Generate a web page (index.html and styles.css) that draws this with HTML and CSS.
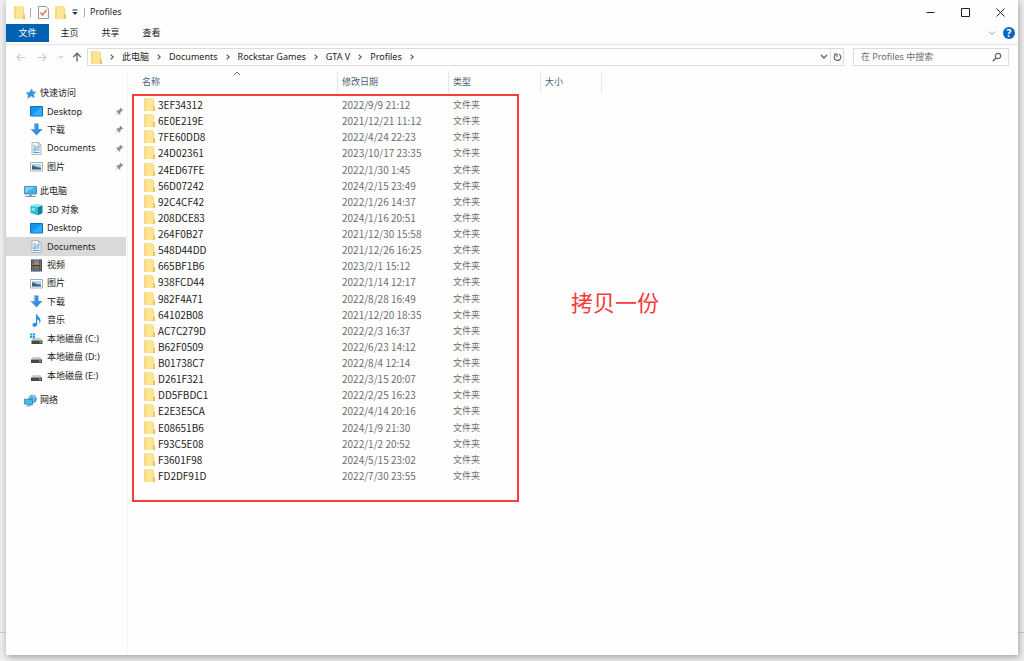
FILE: index.html
```html
<!DOCTYPE html>
<html lang="zh-CN">
<head>
<meta charset="utf-8">
<title>Profiles</title>
<link rel="stylesheet" href="styles.css">
</head>
<body>
<svg class="sprite" aria-hidden="true">
  <symbol id="folder" viewBox="0 0 11 13"><path d="M1 0h8v1h1v12H0V1z" fill="#fde596"/><path d="M0 1l1-1h1v13H0z" fill="#f8d980"/><path d="M9 8h1.500l.5 1v4H8.500l.5-1z" fill="#ecc65c"/><path d="M9 2h1v6H9z" fill="#f6d884"/></symbol>
  <symbol id="chev" viewBox="0 0 6 6"><path d="M1.700.6L4.200 3 1.700 5.400" fill="none" stroke="#555" stroke-width="1.100"/></symbol>
  <symbol id="pin" viewBox="0 0 10 10"><path d="M6 .8L9.200 4l-1 .5-.6-.1L6 6l-.1 1.900-.9.7-1.700-1.800L1 9.300l-.4-.3 2.500-2.600L1.300 4.600l.8-.8L4 3.700l1.500-1.500-.1-.8z" fill="#8b9197"/></symbol>
  <symbol id="desktop" viewBox="0 0 13 13"><path d="M.5 1.500h12v9.500H.5z" fill="#1595ee" stroke="#0b6fc0"/><path d="M1 10.500L12 2v8.500z" fill="#31aefb"/></symbol>
  <symbol id="down" viewBox="0 0 13 13"><path d="M4.500.5h4V6h4L6.500 12.500.5 6h4z" fill="#3b8ede"/><path d="M4.500.5h1V7h-3l-2-1h4z" fill="#63aaed"/></symbol>
  <symbol id="doc" viewBox="0 0 13 13"><path d="M2 .5h6.500l2.500 2.500v9.500H2z" fill="#f7fafc" stroke="#9aa6ae" stroke-width=".8"/><path d="M8.500.5V3H11" fill="none" stroke="#9aa6ae" stroke-width=".8"/><path d="M3.500 4H6M3.500 6h6M6 8h3.500M3.500 10.500h6M7.500 4.500h2" stroke="#4a9ccc"/><path d="M3.500 7h2v2.500h-2z" fill="#62b0d8"/></symbol>
  <symbol id="pic" viewBox="0 0 13 13"><path d="M.5 2.500h12v8.500H.5z" fill="#fff" stroke="#a6adb3"/><path d="M2 4h9v5.500H2z" fill="#a9d3ee"/><path d="M2 5.500l2 .2L6.500 7l4.500.7v1.800H2z" fill="#37617c"/></symbol>
  <symbol id="pc" viewBox="0 0 13 13"><path d="M.5 1.500h12v7.500H.5z" fill="#3db2ed" stroke="#5b8cab"/><path d="M1 2h10L1 8z" fill="#78d2f8"/><path d="M1 11h11v1H1zM5 9.500h3V11H5z" fill="#8599a5"/></symbol>
  <symbol id="cube" viewBox="0 0 13 13"><path d="M.5 2.500L5.500.8l7 1.500-5 2z" fill="#94e4ee"/><path d="M.5 2.500l7 1.800v8L.5 10z" fill="#29c0d4"/><path d="M7.500 4.300l5-2v7.900l-5 2.100z" fill="#0d83a2"/><path d="M2 4.500l3 .8v3L2 7.500z" fill="#8de4ee"/></symbol>
  <symbol id="film" viewBox="0 0 13 13"><path d="M1 .5h11v12H1z" fill="#353535"/><path d="M3.500 1h6v5h-6z" fill="#6484b8"/><path d="M3.500 7h6v5h-6z" fill="#997a45"/><path d="M3.500 4.500L6 3l3.500 2V6h-6z" fill="#b68a3a"/><path d="M3.500 9.500L7 8l2.500 3V12h-6z" fill="#4e6fa8"/><path d="M2.200 1.500v11M10.800 1.500v11" stroke="#ddd" stroke-dasharray="1 1"/></symbol>
  <symbol id="music" viewBox="0 0 13 13"><path d="M6 .5h1.200c.2 2.200 3.800 3 3.300 7-.3 1-.8 1.700-1.300 2 .7-2.300-.3-3.800-2-4.300v4.900c0 3-4.700 3.400-4.700.9 0-1.700 1.900-2.500 3.500-2z" fill="#1b91e8"/></symbol>
  <symbol id="drive" viewBox="0 0 13 13"><path d="M3 6h7l2 2.500H1z" fill="#c9cccd"/><path d="M1 8.500h11V12H1z" fill="#444849"/><path d="M9 9.500h2v1.500H9z" fill="#59cb5a"/></symbol>
  <symbol id="drivec" viewBox="0 0 13 13"><path d="M3 6h7l2.500 2.500h-11z" fill="#c9cccd"/><path d="M1.500 8.500h11V12h-11z" fill="#444849"/><path d="M9.500 9.500h2v1.500h-2z" fill="#59cb5a"/><path d="M0 1.500h2v2H0zM2.600 1.200H5v2.300H2.600zM0 4h2v2H0zM2.600 4H5v2.200H2.600z" fill="#18a5ea"/></symbol>
  <symbol id="net" viewBox="0 0 13 13"><circle cx="8.500" cy="5" r="4.300" fill="#4a9fcf"/><path d="M5 3.500q3.500-3 7 0M8.500.8q3 3.700 0 8" fill="none" stroke="#b2dcf1" stroke-width=".8"/><path d="M.5 5l8 .8v5.100l-8-.8z" fill="#45b8ee" stroke="#3f82a8" stroke-width=".8"/><path d="M2.500 12.400L7 11.300" stroke="#7d919d"/></symbol>
  <symbol id="star" viewBox="0 0 13 13"><path d="M8 1.500l.8 3 3.700.3-2.800 2.400.8 4-3.300-1.900-4 2.400 1-3.600-2.400-2.400 3.700-.6z" fill="#2d97e0"/></symbol>
</svg>
<div class="window">
  <header class="titlebar">
    <svg class="folder"><use href="#folder"/></svg>
    <span class="rule"></span>
    <button class="tool" aria-label="属性"><svg width="11" height="13" viewBox="0 0 11 13"><path d="M.5.500H8L10.500 3v9.500H.5z" fill="#fafafa" stroke="#9a9a9a"/><path d="M2.500 6.500L4.500 9l4-5" fill="none" stroke="#e5794e" stroke-width="1.500"/></svg></button>
    <button class="tool" aria-label="新建文件夹"><svg class="folder"><use href="#folder"/></svg></button>
    <button class="tool small" aria-label="自定义快速访问工具栏"><svg width="6" height="7" viewBox="0 0 6 7"><path d="M.5 1h5" stroke="#333"/><path d="M.3 3h5.400L3 6z" fill="#333"/></svg></button>
    <span class="rule near"></span>
    <h1 class="title">Profiles</h1>
    <div class="controls">
      <button aria-label="最小化"><svg width="9" height="9" viewBox="0 0 9 9"><path d="M.5 4.500h8" stroke="#222"/></svg></button>
      <button aria-label="最大化"><svg width="9" height="9" viewBox="0 0 9 9"><path d="M.5.500h8v8h-8z" fill="none" stroke="#222"/></svg></button>
      <button aria-label="关闭"><svg width="9" height="9" viewBox="0 0 9 9"><path d="M.5.500l8 8M8.500.5l-8 8" stroke="#222"/></svg></button>
    </div>
  </header>
  <div class="tabs">
    <button class="tab file">文件</button>
    <button class="tab">主页</button>
    <button class="tab">共享</button>
    <button class="tab">查看</button>
    <button class="tool expand" aria-label="展开功能区"><svg width="8" height="6" viewBox="0 0 8 6"><path d="M1 1.500l3 3 3-3" fill="none" stroke="#999"/></svg></button>
    <button class="help" aria-label="帮助">?</button>
  </div>
  <div class="address">
    <div class="history">
      <button class="tool" aria-label="后退"><svg width="10" height="9" viewBox="0 0 10 9"><path d="M9.500 4.500H1M4.500 1L1 4.500 4.500 8" fill="none" stroke="#ccc" stroke-width="1.200"/></svg></button>
      <button class="tool" aria-label="前进"><svg width="10" height="9" viewBox="0 0 10 9"><path d="M.5 4.500H9M5.500 1L9 4.500 5.500 8" fill="none" stroke="#ccc" stroke-width="1.200"/></svg></button>
      <button class="tool" aria-label="最近浏览的位置"><svg width="6" height="5" viewBox="0 0 6 5"><path d="M1 1l2 2 2-2" fill="none" stroke="#bbb"/></svg></button>
      <button class="tool" aria-label="上移"><svg width="10" height="10" viewBox="0 0 10 10"><path d="M5 9.500V1.500M1.200 5L5 1.200 8.800 5" fill="none" stroke="#666" stroke-width="1.400"/></svg></button>
    </div>
    <nav class="crumbs" aria-label="路径">
      <svg class="folder"><use href="#folder"/></svg>
      <svg class="chev"><use href="#chev"/></svg><a href="#">此电脑</a>
      <svg class="chev"><use href="#chev"/></svg><a href="#">Documents</a>
      <svg class="chev"><use href="#chev"/></svg><a href="#">Rockstar Games</a>
      <svg class="chev"><use href="#chev"/></svg><a href="#">GTA V</a>
      <svg class="chev"><use href="#chev"/></svg><a href="#">Profiles</a>
      <svg class="chev"><use href="#chev"/></svg>
      <button class="tool drop" aria-label="以前的位置"><svg width="8" height="6" viewBox="0 0 8 6"><path d="M1 1l3 3 3-3" fill="none" stroke="#666" stroke-width="1.400"/></svg></button>
      <button class="tool refresh" aria-label="刷新"><svg width="9" height="10" viewBox="0 0 9 10"><path d="M6 2.200A3.300 3.300 0 1 1 2.500 2.500M1 2h3v3" fill="none" stroke="#666" stroke-width="1.200"/></svg></button>
    </nav>
    <label class="search">
      <input type="text" aria-label="搜索" placeholder="在 Profiles 中搜索">
      <svg width="10" height="10" viewBox="0 0 10 10"><circle cx="6" cy="4" r="2.700" fill="none" stroke="#666" stroke-width="1.200"/><path d="M4 6L.8 9.200" stroke="#666" stroke-width="1.500"/></svg>
    </label>
  </div>
  <div class="body">
    <nav class="sidebar" aria-label="导航窗格">
      <ul class="quick">
        <li><a class="root" href="#"><svg><use href="#star"/></svg>快速访问</a></li>
        <li><a href="#"><svg><use href="#desktop"/></svg>Desktop<svg class="pin"><use href="#pin"/></svg></a></li>
        <li><a href="#"><svg><use href="#down"/></svg>下载<svg class="pin"><use href="#pin"/></svg></a></li>
        <li><a href="#"><svg><use href="#doc"/></svg>Documents<svg class="pin"><use href="#pin"/></svg></a></li>
        <li><a href="#"><svg><use href="#pic"/></svg>图片<svg class="pin"><use href="#pin"/></svg></a></li>
      </ul>
      <ul class="computer">
        <li><a class="root" href="#"><svg><use href="#pc"/></svg>此电脑</a></li>
        <li><a href="#"><svg><use href="#cube"/></svg>3D 对象</a></li>
        <li><a href="#"><svg><use href="#desktop"/></svg>Desktop</a></li>
        <li><a class="current" aria-current="true" href="#"><svg><use href="#doc"/></svg>Documents</a></li>
        <li><a href="#"><svg><use href="#film"/></svg>视频</a></li>
        <li><a href="#"><svg><use href="#pic"/></svg>图片</a></li>
        <li><a href="#"><svg><use href="#down"/></svg>下载</a></li>
        <li><a href="#"><svg><use href="#music"/></svg>音乐</a></li>
        <li><a href="#"><svg><use href="#drivec"/></svg>本地磁盘 (C:)</a></li>
        <li><a href="#"><svg><use href="#drive"/></svg>本地磁盘 (D:)</a></li>
        <li><a href="#"><svg><use href="#drive"/></svg>本地磁盘 (E:)</a></li>
      </ul>
      <ul>
        <li><a class="root" href="#"><svg><use href="#net"/></svg>网络</a></li>
      </ul>
    </nav>
    <main class="content">
      <table class="files">
        <colgroup><col class="c-name"><col class="c-date"><col class="c-type"><col class="c-size"></colgroup>
        <thead><tr>
          <th><div>名称<svg class="sort" width="8" height="5" viewBox="0 0 8 5"><path d="M1 4l3-3 3 3" fill="none" stroke="#777"/></svg></div></th>
          <th><div>修改日期</div></th><th><div>类型</div></th><th><div>大小</div></th>
        </tr></thead>
        <tbody>
          <tr><td><svg class="folder"><use href="#folder"/></svg>3EF34312</td><td>2022/9/9 21:12</td><td>文件夹</td><td></td></tr>
          <tr><td><svg class="folder"><use href="#folder"/></svg>6E0E219E</td><td>2021/12/21 11:12</td><td>文件夹</td><td></td></tr>
          <tr><td><svg class="folder"><use href="#folder"/></svg>7FE60DD8</td><td>2022/4/24 22:23</td><td>文件夹</td><td></td></tr>
          <tr><td><svg class="folder"><use href="#folder"/></svg>24D02361</td><td>2023/10/17 23:35</td><td>文件夹</td><td></td></tr>
          <tr><td><svg class="folder"><use href="#folder"/></svg>24ED67FE</td><td>2022/1/30 1:45</td><td>文件夹</td><td></td></tr>
          <tr><td><svg class="folder"><use href="#folder"/></svg>56D07242</td><td>2024/2/15 23:49</td><td>文件夹</td><td></td></tr>
          <tr><td><svg class="folder"><use href="#folder"/></svg>92C4CF42</td><td>2022/1/26 14:37</td><td>文件夹</td><td></td></tr>
          <tr><td><svg class="folder"><use href="#folder"/></svg>208DCE83</td><td>2024/1/16 20:51</td><td>文件夹</td><td></td></tr>
          <tr><td><svg class="folder"><use href="#folder"/></svg>264F0B27</td><td>2021/12/30 15:58</td><td>文件夹</td><td></td></tr>
          <tr><td><svg class="folder"><use href="#folder"/></svg>548D44DD</td><td>2021/12/26 16:25</td><td>文件夹</td><td></td></tr>
          <tr><td><svg class="folder"><use href="#folder"/></svg>665BF1B6</td><td>2023/2/1 15:12</td><td>文件夹</td><td></td></tr>
          <tr><td><svg class="folder"><use href="#folder"/></svg>938FCD44</td><td>2022/1/14 12:17</td><td>文件夹</td><td></td></tr>
          <tr><td><svg class="folder"><use href="#folder"/></svg>982F4A71</td><td>2022/8/28 16:49</td><td>文件夹</td><td></td></tr>
          <tr><td><svg class="folder"><use href="#folder"/></svg>64102B08</td><td>2021/12/20 18:35</td><td>文件夹</td><td></td></tr>
          <tr><td><svg class="folder"><use href="#folder"/></svg>AC7C279D</td><td>2022/2/3 16:37</td><td>文件夹</td><td></td></tr>
          <tr><td><svg class="folder"><use href="#folder"/></svg>B62F0509</td><td>2022/6/23 14:12</td><td>文件夹</td><td></td></tr>
          <tr><td><svg class="folder"><use href="#folder"/></svg>B01738C7</td><td>2022/8/4 12:14</td><td>文件夹</td><td></td></tr>
          <tr><td><svg class="folder"><use href="#folder"/></svg>D261F321</td><td>2022/3/15 20:07</td><td>文件夹</td><td></td></tr>
          <tr><td><svg class="folder"><use href="#folder"/></svg>DD5FBDC1</td><td>2022/2/25 16:23</td><td>文件夹</td><td></td></tr>
          <tr><td><svg class="folder"><use href="#folder"/></svg>E2E3E5CA</td><td>2022/4/14 20:16</td><td>文件夹</td><td></td></tr>
          <tr><td><svg class="folder"><use href="#folder"/></svg>E08651B6</td><td>2024/1/9 21:30</td><td>文件夹</td><td></td></tr>
          <tr><td><svg class="folder"><use href="#folder"/></svg>F93C5E08</td><td>2022/1/2 20:52</td><td>文件夹</td><td></td></tr>
          <tr><td><svg class="folder"><use href="#folder"/></svg>F3601F98</td><td>2024/5/15 23:02</td><td>文件夹</td><td></td></tr>
          <tr><td><svg class="folder"><use href="#folder"/></svg>FD2DF91D</td><td>2022/7/30 23:55</td><td>文件夹</td><td></td></tr>
        </tbody>
      </table>
      <div class="mark"></div>
      <p class="note">拷贝一份</p>
    </main>
  </div>
</div>
</body>
</html>
```
FILE: styles.css
```css
* { box-sizing: border-box; }

body {
  margin: 0;
  min-height: 100vh;
  display: flex;
  padding: 0 6px 6px;
  background: linear-gradient(to top, #efefef 28px, #cfcfcf 28px, #cfcfcf 29px, #efefef 29px);
  font: 9px/16px "Noto Sans", "Noto Sans CJK SC", sans-serif;
  color: #222;
}

button, input {
  font: inherit;
  color: inherit;
  border: 0;
  padding: 0;
  margin: 0;
  background: none;
}

a { color: inherit; text-decoration: none; }
svg { display: block; flex: none; }
ul { list-style: none; margin: 0; padding: 0; }

.sprite { position: absolute; width: 0; height: 0; }
.folder { width: 11px; height: 13px; }
.tool { display: flex; align-items: center; justify-content: center; }

.window {
  flex: 1;
  display: flex;
  flex-direction: column;
  background: #fefefe;
  box-shadow: 1px 2px 7px rgba(0, 0, 0, 0.35);
}

.titlebar {
  display: flex;
  align-items: center;
  height: 24px;
  padding-left: 8px;
}
.rule { width: 1px; height: 9px; margin: 0 7px 0 5px; background: #aaa; }
.rule.near { margin: 0 5px 0 6px; }
.titlebar .tool { margin-right: 6px; }
.titlebar .tool.small { margin-right: 0; }
.title { margin: 0; font-size: 9px; font-weight: 400; }
.controls { display: flex; margin-left: auto; }
.controls button {
  width: 35px;
  height: 24px;
  display: flex;
  align-items: center;
  justify-content: center;
}

.tabs {
  display: flex;
  align-items: center;
  height: 21px;
  padding-bottom: 2px;
  border-bottom: 1px solid #e4e4e4;
}
.tab { width: 41px; height: 18px; }
.tab.file { width: 43px; background: #0063b1; color: #fff; }
.expand { margin-left: auto; }
.help {
  width: 12px;
  height: 12px;
  margin: 0 3px 0 7px;
  border-radius: 50%;
  background: #0b66c3;
  color: #fff;
  font-size: 10px;
  font-weight: 700;
  line-height: 12px;
}

.address {
  display: flex;
  align-items: center;
  padding: 3px 9px 5px 10px;
}
.history { display: flex; align-items: center; gap: 11px; padding-right: 5px; }
.history .tool:nth-child(3) { margin-right: -3px; }
.crumbs {
  flex: 1;
  display: flex;
  align-items: center;
  height: 18px;
  padding-left: 3px;
  border: 1px solid #dcdcdc;
}
.chev { width: 6px; height: 6px; margin: 0 7px; }
.drop { margin-left: auto; width: 12px; }
.refresh { width: 13px; height: 16px; border-left: 1px solid #dcdcdc; }
.search {
  display: flex;
  align-items: center;
  width: 156px;
  height: 18px;
  margin-left: 9px;
  padding: 0 6px 0 7px;
  border: 1px solid #dcdcdc;
}
.search input { flex: 1; min-width: 0; outline: 0; }
.search input::placeholder { color: #6d6d6d; opacity: 1; }

.body { flex: 1; display: flex; }

.sidebar {
  flex: none;
  width: 122px;
  padding: 13px 1px 0 0;
  border-right: 1px solid #f5f5f5;
  display: flex;
  flex-direction: column;
  gap: 6px;
}
.sidebar ul { display: grid; }
.quick { min-height: 92px; }
.computer { min-height: 203px; }
.sidebar a {
  display: flex;
  align-items: center;
  gap: 4px;
  height: 100%;
  min-height: 18px;
  padding: 0 2px 0 24px;
}
.sidebar a.root { padding-left: 18px; gap: 3px; }
.sidebar a.current { background: #d9d9d9; }
.sidebar svg { width: 13px; height: 13px; }
.sidebar .pin { width: 9px; height: 9px; margin-left: auto; }

.content { position: relative; flex: 1; padding: 0 0 24px; }

.files { table-layout: fixed; width: 474px; border-collapse: collapse; }
.c-name { width: 210px; }
.c-date { width: 111px; }
.c-type { width: 92px; }
.c-size { width: 61px; }
.files th { padding: 0 0 4px; font-weight: 400; text-align: left; color: #4c607a; }
.files th div {
  position: relative;
  height: 22px;
  padding-left: 4px;
  line-height: 22px;
  border-right: 1px solid #e5e5e5;
}
.files th:first-child div { padding-left: 14px; }
.sort { position: absolute; top: 0; left: 50%; }
.files tbody { height: 387px; }
.files td { padding: 0 0 0 4px; line-height: 16px; color: #6d6d6d; white-space: nowrap; }
.files td:nth-child(-n+2) { font-family: "Noto Sans CJK SC", sans-serif; font-size: 10px; }
.files td:first-child { padding-left: 16px; color: #222; }
.files td .folder { display: inline-block; vertical-align: -2px; margin-right: 3px; }

/* Highlight frame and caption drawn over the list */
.mark {
  position: absolute;
  top: 23px;
  left: 4px;
  width: 387px;
  height: 408px;
  border: 2px solid #fb3a3a;
}
.note {
  position: absolute;
  top: 215px;
  left: 443px;
  margin: 0;
  font-size: 22px;
  line-height: 32px;
  color: #fb3a3a;
}
```
